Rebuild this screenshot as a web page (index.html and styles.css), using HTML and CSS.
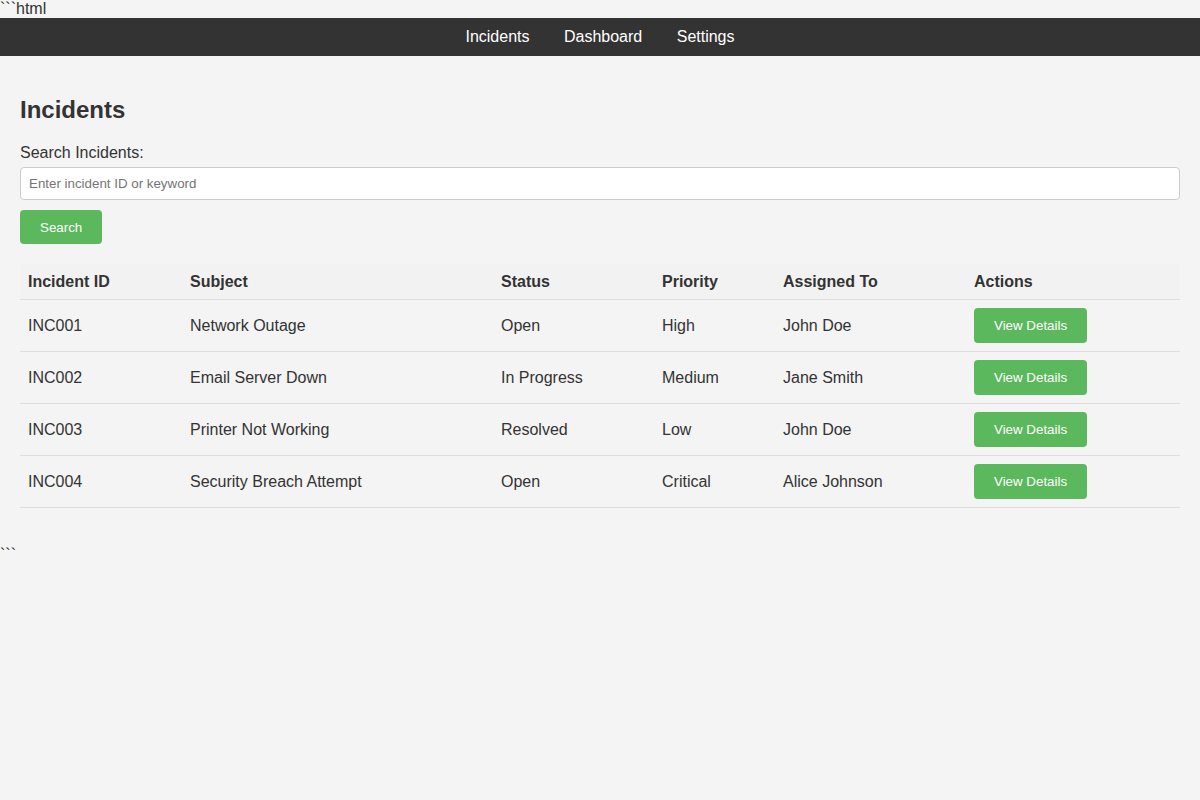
FILE: index.html
```html
<!DOCTYPE html>
<html lang="en">
<head>
<meta charset="utf-8">
<title>Incidents</title>
<link rel="stylesheet" href="styles.css">
</head>
<body>
<div class="fence">```html</div>
<nav class="topnav">
  <a href="#">Incidents</a>
  <a href="#">Dashboard</a>
  <a href="#">Settings</a>
</nav>
<div class="container">
  <h2 class="title">Incidents</h2>
  <label class="search-label" for="q">Search Incidents:</label>
  <input class="search-input" id="q" type="text" placeholder="Enter incident ID or keyword">
  <button class="btn btn-search">Search</button>
  <table class="incidents">
    <colgroup>
      <col class="c-id"><col class="c-subject"><col class="c-status"><col class="c-priority"><col class="c-assigned"><col class="c-actions">
    </colgroup>
    <thead>
      <tr><th>Incident ID</th><th>Subject</th><th>Status</th><th>Priority</th><th>Assigned To</th><th>Actions</th></tr>
    </thead>
    <tbody>
      <tr><td>INC001</td><td>Network Outage</td><td>Open</td><td>High</td><td>John Doe</td><td><button class="btn">View Details</button></td></tr>
      <tr><td>INC002</td><td>Email Server Down</td><td>In Progress</td><td>Medium</td><td>Jane Smith</td><td><button class="btn">View Details</button></td></tr>
      <tr><td>INC003</td><td>Printer Not Working</td><td>Resolved</td><td>Low</td><td>John Doe</td><td><button class="btn">View Details</button></td></tr>
      <tr><td>INC004</td><td>Security Breach Attempt</td><td>Open</td><td>Critical</td><td>Alice Johnson</td><td><button class="btn">View Details</button></td></tr>
    </tbody>
  </table>
</div>
<div class="fence">```</div>
</body>
</html>
```
FILE: styles.css
```css
html, body {
  margin: 0;
  padding: 0;
}
body {
  background: #f4f4f4;
  color: #333;
  font-family: "Liberation Sans", Arial, sans-serif;
  font-size: 16px;
  line-height: normal;
}
.fence {
  line-height: 18px;
}
.topnav {
  background: #333;
  text-align: center;
  padding: 10px 0;
  line-height: 18px;
}
.topnav a {
  color: #fff;
  text-decoration: none;
  margin: 0 15px;
}
.container {
  padding: 20px 20px 38px;
}
.title {
  font-size: 24px;
  font-weight: bold;
  margin: 20px 0;
  line-height: 28px;
}
.search-label {
  display: block;
  line-height: 18px;
  margin-bottom: 5px;
}
.search-input {
  display: block;
  width: 100%;
  box-sizing: border-box;
  padding: 8px;
  border: 1px solid #ccc;
  border-radius: 4px;
  font-family: "Liberation Sans", Arial, sans-serif;
  font-size: 13.333px;
  line-height: 15px;
  background: #fff;
  color: #333;
}
.search-input::placeholder {
  color: #757575;
}
.btn {
  background: #5cb85c;
  color: #fff;
  border: none;
  border-radius: 4px;
  padding: 10px 20px;
  font-family: "Liberation Sans", Arial, sans-serif;
  font-size: 13.333px;
  line-height: 15px;
  cursor: pointer;
}
.btn-search {
  margin-top: 10px;
  display: block;
  height: 34px;
  padding: 0 20px;
}
.incidents {
  width: 100%;
  margin-top: 20px;
  border-collapse: collapse;
  table-layout: fixed;
}
.incidents th, .incidents td {
  text-align: left;
  padding: 8px;
  border-bottom: 1px solid #ddd;
  line-height: 18px;
}
.incidents th {
  background: #f2f2f2;
  font-weight: bold;
  line-height: 19px;
}
.incidents td .btn {
  display: block;
  height: 35px;
  padding: 0 20px;
}
.c-id { width: 162px; }
.c-subject { width: 311px; }
.c-status { width: 161px; }
.c-priority { width: 121px; }
.c-assigned { width: 191px; }
.c-actions { width: 214px; }
```
